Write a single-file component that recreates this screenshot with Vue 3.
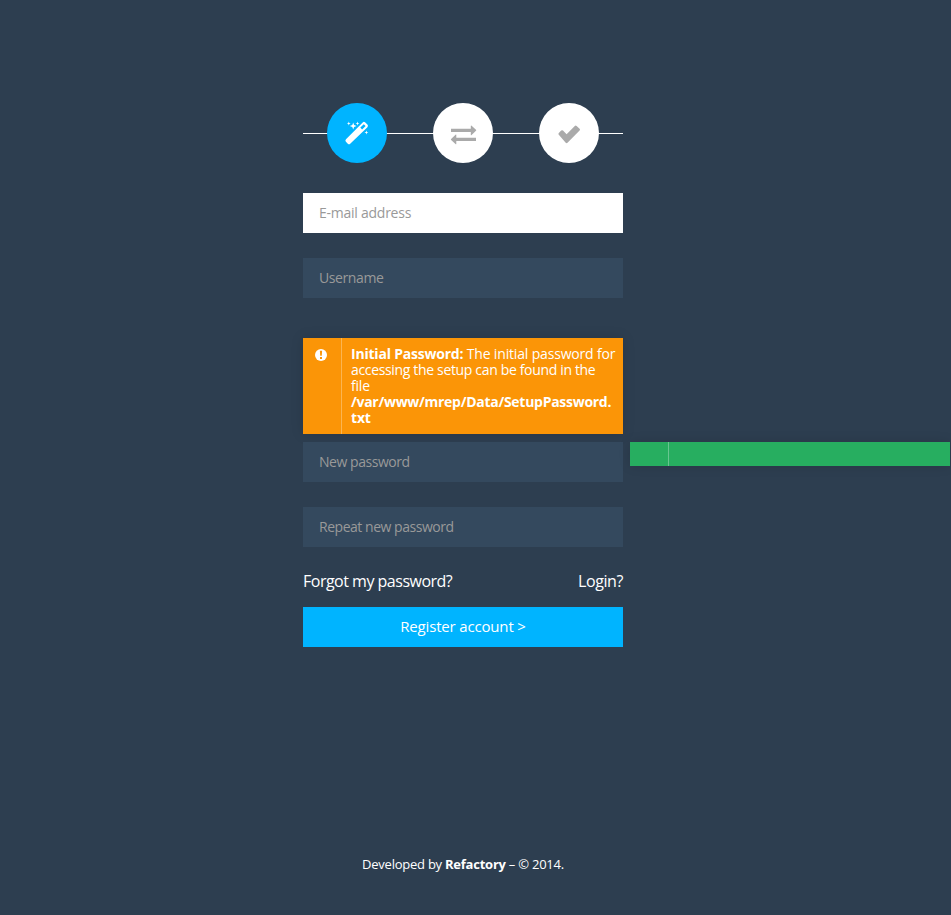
<script setup>
const firstFields = [
  { label: 'E-mail address', cls: 'email' },
  { label: 'Username', cls: 'user' },
]
const passwordFields = [
  { label: 'New password', cls: 'new-pass' },
  { label: 'Repeat new password', cls: 'repeat' },
]
</script>

<template>
  <main class="page">
    <form class="register" @submit.prevent>
      <div class="steps">
        <div class="step active">
          <svg width="60" height="60" viewBox="0 0 60 60">
            <path d="M35.7 19.4Q37 18.2 38.3 19.5L40.4 21.6Q41.6 22.9 40.4 24.2L23.2 40.8Q22 41.9 20.8 40.7L18.9 38.7Q17.8 37.5 19 36.3Z" fill="#fff" />
            <path d="M33.3 24.6L36.8 21.2L38.6 23L35.1 26.4Z" fill="#00b4ff" />
            <path d="M26.2 19.6L27.1 22.1L29.6 23L27.1 23.9L26.2 26.4L25.3 23.9L22.8 23L25.3 22.1ZM21.8 18.6L22.3 20L23.7 20.5L22.3 21L21.8 22.4L21.3 21L19.9 20.5L21.3 20ZM30.5 18.6L31 20L32.4 20.5L31 21L30.5 22.4L30 21L28.6 20.5L30 20ZM39.4 27.5L39.9 29L41.4 29.5L39.9 30L39.4 31.5L38.9 30L37.4 29.5L38.9 29Z" fill="#fff" />
          </svg>
        </div>
        <div class="step">
          <svg width="60" height="60" viewBox="0 0 60 60" fill="#aaa">
            <path d="M18 25.7H37.8V23Q37.8 22.1 38.6 22.7L43 26.8Q43.5 27.3 43 27.8L38.6 32Q37.8 32.7 37.8 31.8V29.1H18Z" />
            <path d="M43 34.7H23.3V32Q23.3 31.1 22.5 31.8L18.1 36Q17.6 36.5 18.1 37L22.5 41.1Q23.3 41.7 23.3 40.8V38.1H43Z" />
          </svg>
        </div>
        <div class="step">
          <svg width="60" height="60" viewBox="0 0 60 60">
            <path d="M19.8 31.8Q18.9 30.9 19.8 30L22.2 27.6Q23.1 26.7 24 27.6L27.6 31.2L35.8 23Q36.7 22.1 37.6 23L40.6 25.8Q41.5 26.7 40.6 27.6L28.5 39.7Q27.6 40.6 26.7 39.7Z" fill="#aaa" />
          </svg>
        </div>
      </div>

      <input v-for="f in firstFields" :key="f.cls" class="field" :class="f.cls" :placeholder="f.label" />

      <div class="alert warning">
        <div class="alert-icon">
          <svg width="12" height="12" viewBox="0 0 12 12">
            <circle cx="6" cy="6" r="6" fill="#fff" />
            <path d="M4.9 1.8H7.1L6.8 6.8H5.2ZM5 7.9H7V9.9H5Z" fill="#fb9507" />
          </svg>
        </div>
        <div class="alert-text">
          <span class="line first"><b class="title">Initial Password:</b> The initial password for</span>
          <span class="line second">accessing the setup can be found in the</span>
          <span class="line">file</span>
          <b class="line path">/var/www/mrep/Data/SetupPassword.</b>
          <b class="line">txt</b>
        </div>
      </div>

      <div class="password-row">
        <input class="field new-pass" type="password" :placeholder="passwordFields[0].label" />
        <div class="alert success"><div class="alert-icon"></div></div>
      </div>
      <input class="field repeat" type="password" :placeholder="passwordFields[1].label" />

      <div class="links">
        <a class="forgot">Forgot my password?</a>
        <a class="login">Login?</a>
      </div>
      <button class="submit">Register account &gt;</button>
    </form>
    <footer><span>Developed by <b>Refactory</b> – © 2014.</span></footer>
  </main>
</template>

<style>
body { background: #2d3e50; }
</style>

<style scoped>
.page {
  box-sizing: border-box;
  height: 915px;
  padding: 103px 25px 0 0;
  display: flex;
  flex-direction: column;
  align-items: center;
  overflow: hidden;
  background: #2d3e50;
  color: #fff;
  font-family: "Droid Sans", "Open Sans", "Noto Sans", sans-serif;
  font-size: 14px;
}
.register { width: 320px; height: 544px; display: flex; flex-direction: column; }
.steps {
  height: 60px;
  margin-bottom: 30px;
  padding: 0 24px;
  display: flex;
  justify-content: space-between;
  background: linear-gradient(#fff, #fff) 0 30px / 100% 1px no-repeat;
}
.step { width: 60px; height: 60px; border-radius: 50%; background: #fff; }
.step.active { background: #00b4ff; }
svg { display: block; }
.field {
  box-sizing: border-box;
  flex: none;
  width: 320px;
  height: 40px;
  margin: 0 0 25px;
  padding: 0 16px 2px;
  border: 0;
  border-radius: 0;
  outline: 0;
  background: #34495e;
  color: #999;
  font: inherit;
}
.field::placeholder { color: #999; opacity: 1; }
.email { background: #fff; letter-spacing: -0.25px; }
.user { margin-bottom: 40px; letter-spacing: -0.4px; }
.new-pass { margin-bottom: 0; letter-spacing: -0.45px; }
.repeat { letter-spacing: -0.47px; }
.alert { display: flex; box-shadow: 0 0 12px rgba(0, 0, 0, .13); }
.alert-icon { box-sizing: border-box; width: 39px; border-right: 1px solid rgba(255, 255, 255, .3); }
.warning { height: 96px; margin-bottom: 8px; background: #fb9507; }
.warning .alert-icon { padding: 11px 0 0 12px; }
.alert-text { padding: 8px 0 0 9px; line-height: 16px; }
.line { display: block; white-space: nowrap; letter-spacing: -0.2px; }
.first { letter-spacing: -0.17px; }
.title { letter-spacing: -0.21px; }
.second { letter-spacing: -0.34px; }
.path { letter-spacing: -0.28px; }
.password-row { display: flex; align-items: flex-start; gap: 7px; margin-bottom: 25px; }
.success { flex: none; width: 320px; height: 24px; background: #27ae60; }
.links { display: flex; justify-content: space-between; height: 35px; font-size: 16px; line-height: 19px; }
.links a { white-space: nowrap; letter-spacing: -0.5px; }
.links .login { letter-spacing: -0.4px; }
.submit {
  flex: none;
  height: 40px;
  padding: 0 0 2px;
  border: 0;
  background: #00b4ff;
  color: #fff;
  font: inherit;
  font-size: 15px;
  letter-spacing: -0.17px;
}
footer { margin-top: 208px; font-size: 13px; line-height: 18px; white-space: nowrap; letter-spacing: -0.24px; }
</style>
